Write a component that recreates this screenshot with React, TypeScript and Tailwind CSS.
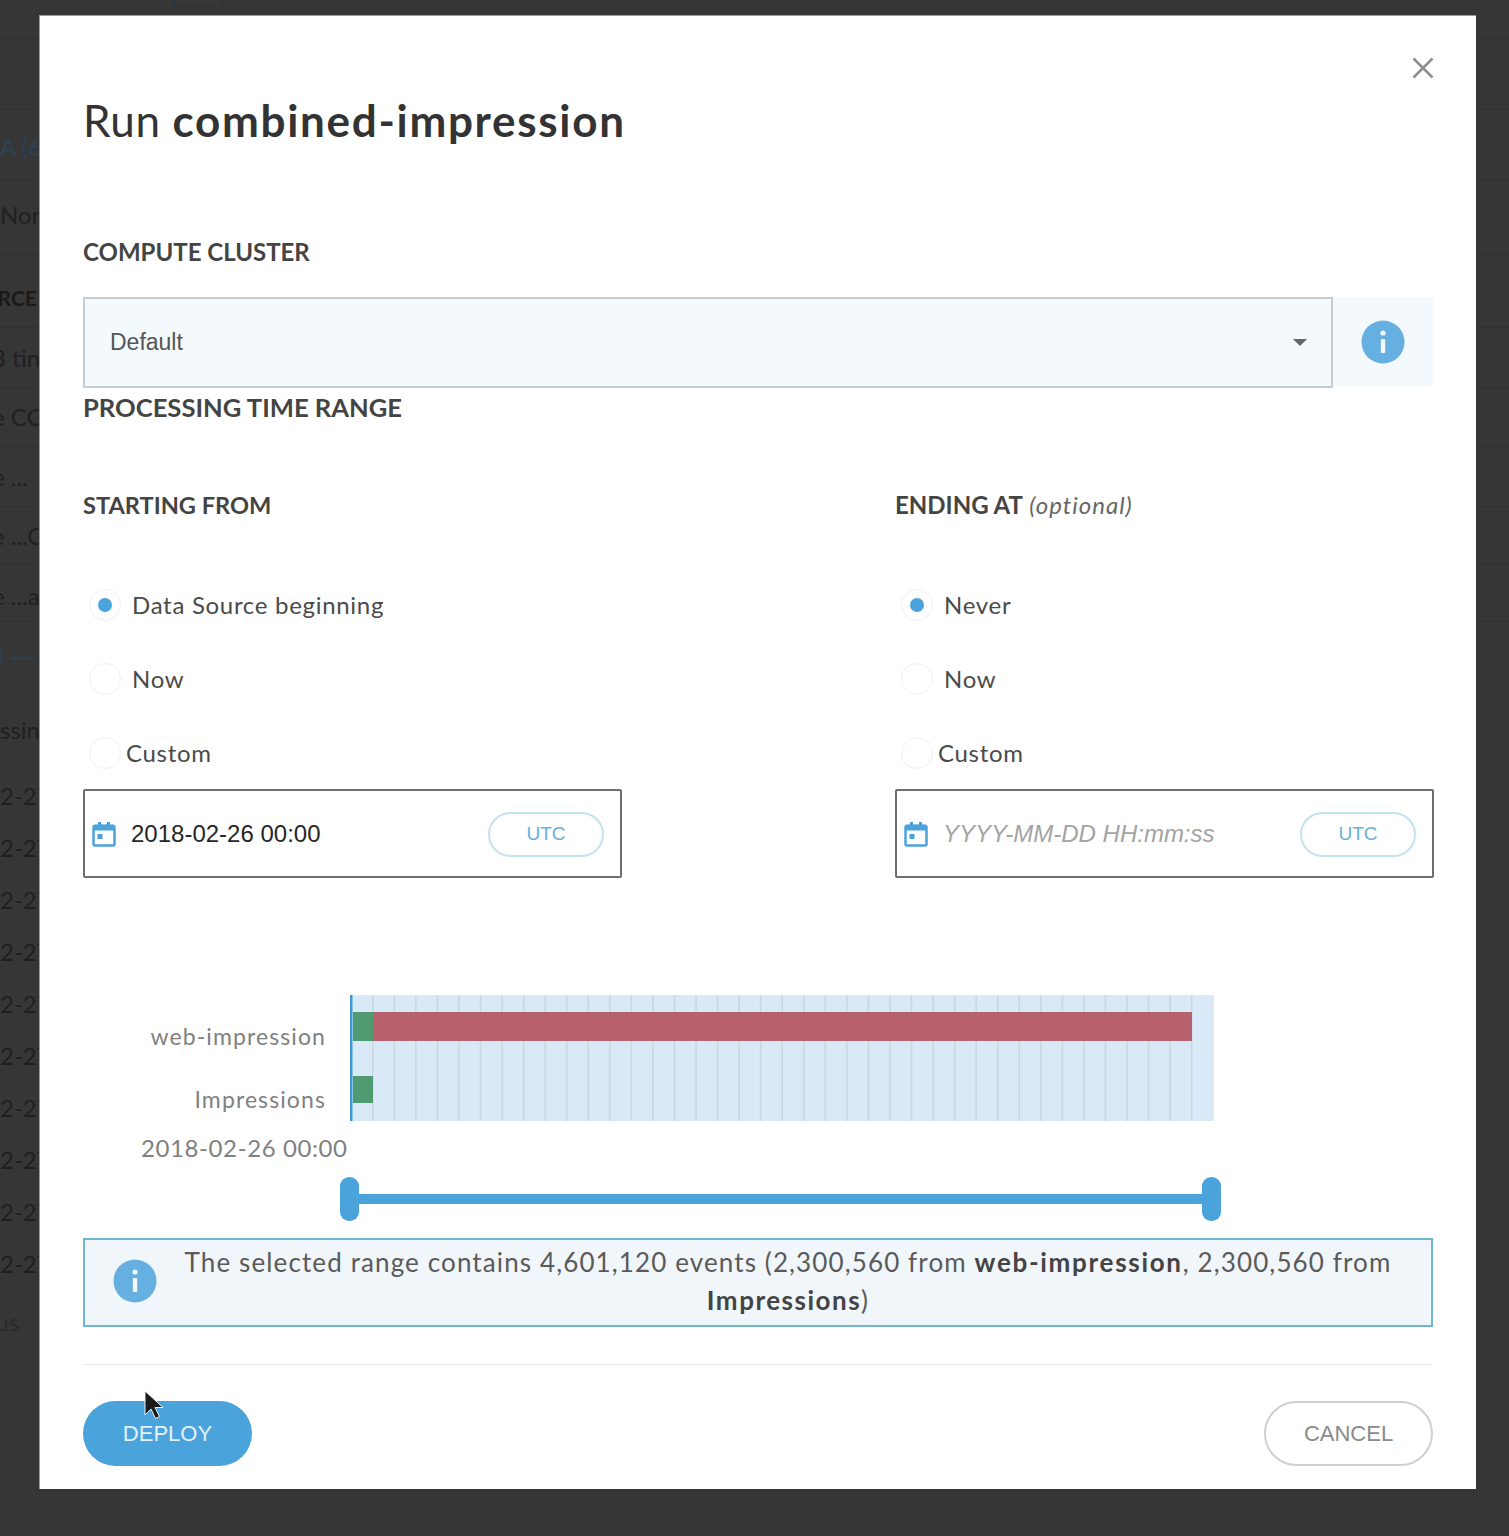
const ghostRows = [
  { text: 'A (6', cls: 'h-[71px] pt-[3px] text-[#2b4257]' },
  { text: 'Nor', cls: 'h-[74px] pb-[6px] text-[#1f1f1f]' },
  { text: 'URCE', cls: 'h-[73px] pt-[13px] -ml-[18px] font-bold text-[#1a1a1a] text-[21px]' },
  { text: '3 tin', cls: 'h-[60px] -ml-[8px] text-[#202020]' },
  { text: 'e CO', cls: 'h-[59px] -ml-[8px] text-[#202020]' },
  { text: 'e ...', cls: 'h-[60px] -ml-[8px] text-[#202020]' },
  { text: 'e ...C', cls: 'h-[58px] -ml-[8px] text-[#202020]' },
  { text: 'e ...a', cls: 'h-[57px] pt-[6px] -ml-[8px] text-[#202020]' },
  { text: '0 ---', cls: 'h-[68px] -ml-[10px] text-[#2b4257]', noLine: true },
  { text: 'ssing', cls: 'h-[80px] text-[#1f1f1f]', noLine: true },
];

const dateRows = Array.from({ length: 10 }, (_, i) => i);
const gridLines = Array.from({ length: 39 }, (_, i) => 22 + i * 21.55);

function InfoIcon() {
  return (
    <svg width="44" height="44" viewBox="0 0 44 44" aria-hidden="true">
      <circle cx="22" cy="22" r="21.5" fill="#65b0e0" />
      <circle cx="22" cy="13" r="2.6" fill="#f3f8fd" />
      <rect x="19.8" y="19" width="4.4" height="14" rx="1" fill="#f3f8fd" />
    </svg>
  );
}

function CalendarIcon() {
  return (
    <svg width="24" height="26" viewBox="0 0 24 26" aria-hidden="true">
      <path d="M1 5.500a2 2 0 0 1 2-2h3V1h3v2.500h6V1h3v2.500h3a2 2 0 0 1 2 2V9.500H1z" fill="#4ba3dc" />
      <rect x="1.500" y="5" width="21" height="19.500" rx="1.500" fill="none" stroke="#4ba3dc" strokeWidth="2.500" />
      <rect x="5.500" y="13" width="5" height="5" fill="#4ba3dc" />
    </svg>
  );
}

function Radio({ label, checked, tight }: { label: string; checked?: boolean; tight?: boolean }) {
  return (
    <div className="flex h-[74px] items-center pl-[6px]">
      <span className="flex h-[32px] w-[32px] items-center justify-center rounded-full border border-[#f0f0f0] bg-white">
        {checked && <span className="h-[14px] w-[14px] rounded-full bg-[#4ba3dc]" />}
      </span>
      <span className={`${tight ? 'ml-[5px]' : 'ml-[11px]'} font-['Lato',sans-serif] text-[24px] tracking-[0.7px] text-[#4a4a4a]`}>
        {label}
      </span>
    </div>
  );
}

function DateInput({ value, placeholder }: { value?: string; placeholder?: string }) {
  return (
    <div className="-mt-[1px] flex h-[89px] w-[539px] items-center rounded-[2px] border-2 border-[#6e6e6e] bg-white pl-[7px] pr-[16px] pt-[1px]">
      <CalendarIcon />
      {value ? (
        <span className="ml-[15px] font-['Liberation_Sans',sans-serif] text-[24px] text-[#262626]">{value}</span>
      ) : (
        <span className="ml-[15px] font-['Liberation_Sans',sans-serif] text-[24px] italic text-[#a3a3a3]">{placeholder}</span>
      )}
      <span className="ml-auto flex h-[45px] w-[116px] items-center justify-center rounded-full border-2 border-[#c4e2ee] font-['Liberation_Sans',sans-serif] text-[19px] text-[#65b0e0]">
        UTC
      </span>
    </div>
  );
}

function TimeChart() {
  return (
    <svg width="864" height="126" viewBox="0 0 864 126" className="block" aria-hidden="true">
      <rect x="0" y="0" width="864" height="126" fill="#d9e9f7" />
      {gridLines.map((x) => (
        <rect key={x} x={x} y="0" width="1.600" height="126" fill="#c6d8e6" />
      ))}
      <rect x="23" y="17" width="819" height="29" fill="#b6616b" />
      <rect x="3" y="17" width="20" height="29" fill="#4f9a70" />
      <rect x="3" y="81" width="20" height="27" fill="#4f9a70" />
      <rect x="0" y="0" width="2.500" height="126" fill="#3f9bd6" />
    </svg>
  );
}

function Cursor() {
  return (
    <svg width="22" height="32" viewBox="0 0 22 32" className="absolute left-[143px] top-[1390px]" aria-hidden="true">
      <path d="M2 1v24l6-6 4.500 9.500 4-2L12 17.500h8z" fill="#1a1a1a" stroke="#f2f2f2" strokeWidth="1" />
    </svg>
  );
}

export default function App() {
  return (
    <div className="relative h-[1536px] w-[1509px] overflow-hidden bg-[#363636]">
      {/* dimmed page behind the modal, only the edges show */}
      <div className="font-['Lato',sans-serif] text-[24px]">
        <div className="h-[39px] border-b border-[#303030] pl-[174px]">
          <div className="h-[7px] w-[50px] border-x border-b border-[#26323d]" />
        </div>
        <div className="h-[71px] border-b border-[#303030]" />
        {ghostRows.map((row) => (
          <div
            key={row.text}
            className={`flex items-center whitespace-nowrap ${row.noLine ? '' : 'border-b border-[#303030]'} ${row.cls}`}
          >
            {row.text}
          </div>
        ))}
        {dateRows.map((i) => (
          <div key={i} className="flex h-[52px] items-center whitespace-nowrap text-[#1f1f1f]">
            2-27
          </div>
        ))}
        <div className="flex h-[64px] -ml-[46px] items-center text-[#2a2a2a]">Status</div>
      </div>

      {/* modal */}
      <div className="absolute left-[39px] top-[15px] h-[1474px] w-[1437px] border-t border-l border-[#9a9a9a] bg-white pl-[43px] pr-[42px]">
        <div className="flex h-[75px] items-start justify-end pt-[41px]">
          <svg width="22" height="22" viewBox="0 0 22 22" aria-hidden="true">
            <path d="M1.500 1.500l19 19M20.500 1.500l-19 19" stroke="#8f8f8f" strokeWidth="2.500" fill="none" />
          </svg>
        </div>

        <h1 className="h-[62px] whitespace-nowrap font-['Lato',sans-serif] text-[44px] leading-[58px] tracking-[0.6px] text-[#333333]">
          Run <span className="font-bold tracking-[1.7px]">combined-impression</span>
        </h1>

        <div className="mt-[84px] font-['Lato',sans-serif] text-[24px] font-bold leading-[30px] text-[#444444]">COMPUTE CLUSTER</div>

        <div className="mt-[30px] flex h-[91px] w-[1350px] items-start">
          <div className="flex h-[91px] w-[1250px] items-center justify-between border-2 border-[#c8cccf] bg-[#f4f9fd] pl-[25px] pr-[24px]">
            <span className="font-['Liberation_Sans',sans-serif] text-[23px] text-[#555555]">Default</span>
            <span className="h-0 w-0 border-x-[7px] border-t-[7px] border-x-transparent border-t-[#666666]" />
          </div>
          <div className="flex h-[89px] w-[100px] items-center justify-center bg-[#f4f9fd] pr-[1px]">
            <InfoIcon />
          </div>
        </div>

        <div className="mt-[4px] font-['Lato',sans-serif] text-[25.6px] font-bold leading-[30px] text-[#444444]">PROCESSING TIME RANGE</div>

        <div className="mt-[68px] flex">
          <div className="w-[812px]">
            <div className="font-['Lato',sans-serif] text-[23.6px] font-bold leading-[30px] text-[#444444]">STARTING FROM</div>
            <div className="mt-[48px]">
              <Radio label="Data Source beginning" checked />
              <Radio label="Now" />
              <Radio label="Custom" tight />
            </div>
            <DateInput value="2018-02-26 00:00" />
          </div>
          <div className="w-[538px]">
            <div className="font-['Lato',sans-serif] text-[24px] leading-[30px] text-[#444444]">
              <span className="font-bold">ENDING AT</span> <em className="tracking-[1px] text-[#666666]">(optional)</em>
            </div>
            <div className="mt-[48px]">
              <Radio label="Never" checked />
              <Radio label="Now" />
              <Radio label="Custom" tight />
            </div>
            <DateInput placeholder="YYYY-MM-DD HH:mm:ss" />
          </div>
        </div>

        <div className="mt-[117px] flex font-['Lato',sans-serif] text-[23px] tracking-[1.1px] text-[#808080]">
          <div className="flex h-[126px] w-[243px] flex-col items-end pt-[25px]">
            <span className="leading-[32px]">web-impression</span>
            <span className="mt-[31px] leading-[32px]">Impressions</span>
          </div>
          <div className="ml-[24px]">
            <TimeChart />
          </div>
        </div>

        <div className="mt-[11px] pl-[58px] font-['Lato',sans-serif] text-[24px] leading-[32px] tracking-[0.6px] text-[#808080]">
          2018-02-26 00:00
        </div>

        {/* range slider */}
        <div className="ml-[257px] mt-[13px] flex h-[44px] w-[881px] items-center">
          <span className="h-[44px] w-[19px] shrink-0 rounded-[9px] bg-[#4ba3dc]" />
          <span className="h-[10px] flex-1 bg-[#4ba3dc]" />
          <span className="h-[44px] w-[19px] shrink-0 rounded-[9px] bg-[#4ba3dc]" />
        </div>

        <div className="mt-[17px] flex h-[89px] w-[1350px] items-start border-2 border-[#6db8cf] bg-[#f1f6fa] pl-[28px] pr-[30px]">
          <div className="mt-[19px] shrink-0">
            <InfoIcon />
          </div>
          <p className="flex-1 pl-[18px] pt-[3px] text-center font-['Lato',sans-serif] text-[26px] leading-[38px] tracking-[1.12px] text-[#5a5a5a]">
            The selected range contains 4,601,120 events (2,300,560 from <b className="tracking-[1.7px] text-[#444444]">web-impression</b>, 2,300,560 from <b className="tracking-[1.5px] text-[#444444]">Impressions</b>)
          </p>
        </div>

        <div className="mt-[37px] h-px w-[1350px] bg-[#ececec]" />

        <div className="mt-[36px] flex w-[1350px] justify-between">
          <div className="flex h-[65px] w-[169px] items-center justify-center rounded-full bg-[#4ba3dc] font-['Liberation_Sans',sans-serif] text-[22px] text-[#e3f1fa]">
            DEPLOY
          </div>
          <div className="flex h-[65px] w-[169px] items-center justify-center rounded-full border-2 border-[#cfcfcf] bg-white font-['Liberation_Sans',sans-serif] text-[22px] text-[#8a8a8a]">
            CANCEL
          </div>
        </div>
      </div>

      <Cursor />
    </div>
  );
}
